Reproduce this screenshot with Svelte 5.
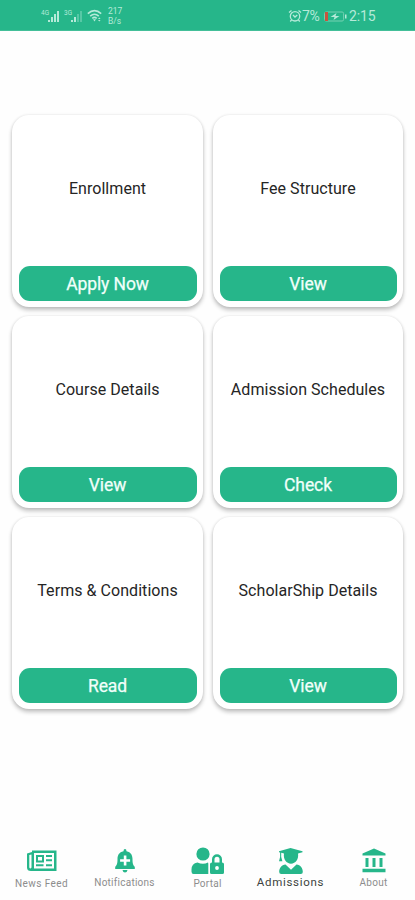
<script>
  const cards = [
    { title: 'Enrollment', action: 'Apply Now' },
    { title: 'Fee Structure', action: 'View' },
    { title: 'Course Details', action: 'View' },
    { title: 'Admission Schedules', action: 'Check' },
    { title: 'Terms & Conditions', action: 'Read' },
    { title: 'ScholarShip Details', action: 'View' }
  ];
  const tabs = [
    { id: 'news', label: 'News Feed' },
    { id: 'bell', label: 'Notifications' },
    { id: 'portal', label: 'Portal' },
    { id: 'admissions', label: 'Admissions' },
    { id: 'about', label: 'About' }
  ];
  let active = $state('admissions');
</script>

<div class="screen">
  <header class="status">
    <div class="left">
      <svg class="signal" width="20" height="14" viewBox="0 0 20 14">
        <text x="0" y="6" font-size="6.5">4G</text>
        <path d="M7 11h2v2H7zM10 8h2v5h-2zM13 5h2v8h-2zM16 2h2v11h-2z" />
      </svg>
      <svg class="signal second" width="20" height="14" viewBox="0 0 20 14">
        <text x="0" y="6" font-size="6.5">3G</text>
        <path d="M7 11h2v2H7zM10 8h2v5h-2z" />
        <path opacity=".35" d="M13 5h2v8h-2zM16 2h2v11h-2z" />
      </svg>
      <svg class="wifi" width="16" height="14" viewBox="0 0 16 14">
        <g fill="none" stroke="#b5ead9" stroke-width="1.6">
          <path d="M.8 4.6Q7.500-1.200 14.200 4.600M3.200 7.100Q7.500 3.400 11.800 7.100M5.300 9.300Q7.500 7.500 9.700 9.300" />
        </g>
        <path d="M6 10.300h3L7.500 12.500zM11 10l1.300-1.600L13.600 10zM11 11h2.600l-1.300 1.600z" />
      </svg>
      <div class="rate"><span>217</span><span>B/s</span></div>
    </div>
    <div class="right">
      <svg width="14" height="14" viewBox="0 0 14 14">
        <g fill="none" stroke="#b5ead9" stroke-width="1.300">
          <circle cx="7" cy="7.300" r="4.700" />
          <path d="M1 3.600 3.500 1.500M13 3.600 10.500 1.500M5 6l2 2 2.300-2M3.600 11l-1.400 1.500M10.400 11l1.400 1.500" />
        </g>
      </svg>
      <span class="percent">7%</span>
      <svg class="battery" width="23" height="11" viewBox="0 0 23 11">
        <rect x=".6" y="1" width="19" height="9" rx="1.500" fill="none" stroke="#75d1b2" stroke-width="1" />
        <rect x="1" y="1" width="3" height="9" style:fill="#c6553d" />
        <path d="M21 3.500h1.500v4H21zM6.500 6l6-4-1 3h4l-6 4 1-3z" />
      </svg>
      <span class="time">2:15</span>
    </div>
  </header>

  <main class="grid">
    {#each cards as card}
      <section class="card">
        <div class="title">{card.title}</div>
        <button class="action">{card.action}</button>
      </section>
    {/each}
  </main>

  <nav class="tabs">
    {#each tabs as tab}
      <button class="tab {tab.id}" class:active={active === tab.id} onclick={() => (active = tab.id)}>
        <svg width="36" height="28" viewBox="0 0 36 28">
          {#if tab.id === 'news'}
            <path fill-rule="evenodd" d="M8 3.500h24.500V24H7Q3 24 3 20.500V6.500L8 5zM10 6v15.500h20V6zM5.300 8v12.500q1 2 2.200 0V7.500z" />
            <path fill-rule="evenodd" d="M12 8h8v7.500h-8zM14 10v3.500h4V10zM22 8h6v2h-6zM22 12.300h6v2h-6zM12 17.300h7.500v2H12zM22 17.300h6v2h-6z" />
          {:else if tab.id === 'bell'}
            <path d="M18 2q1.500 0 1.500 2.200c4.500.9 6 4.100 6 7.800 0 4.500.6 6.200 2.300 7.800V22H8.200v-2.200c1.700-1.600 2.300-3.300 2.300-7.800 0-3.700 1.500-6.900 6-7.800Q16.500 2 18 2zM15.500 23h5Q20 25.600 18 25.600T15.500 23z" />
            <path class="cut" d="M16.800 8.500h2.600v3.700h3.700v2.600h-3.700v3.700h-2.600v-3.700h-3.700v-2.600h3.700z" />
          {:else if tab.id === 'portal'}
            <circle cx="13" cy="7" r="6.600" />
            <path d="M7.500 15.500Q13 18 18 15.500Q18.300 16 18.300 17V27H3.500Q1.500 27 1.500 24.500v-2q0-6 6-7z" />
            <path fill-rule="evenodd" d="M22 15.500v-3.200a5 5 0 0 1 10 0v3.200q2 0 2 1.500v8.500q0 1.500-1.500 1.500h-11Q20 27 20 25.500V17q0-1.500 2-1.500zM24.500 15.500h5v-3.200a2.500 2.500 0 0 0-5 0z" />
            <circle class="cut" cx="27" cy="21" r="1.900" />
          {:else if tab.id === 'admissions'}
            <path d="M6 4.300 17.500 1 29.500 4.300v.9L25 6.600c1 5.800-2.500 10.100-7 10.100S10 12.400 11 6.600L8.200 5.800V10l1.200 4.300H6L7.100 10V5.500L6 5.200z" />
            <path d="m12.500 17.500 5.500 5.300 5.500-5.300c4 .5 6.300 3.500 6.300 7.500q0 2-2 2H8.200q-2 0-2-2c0-4 2.300-7 6.300-7.500z" />
          {:else}
            <path d="m18 1.500 11.500 5v2h-23v-2zM9.500 11h3v9h-3zM16.500 11h3v9h-3zM23.500 11h3v9h-3zM6.500 21.800h23v3.400h-23z" />
          {/if}
        </svg>
        <span>{tab.label}</span>
      </button>
    {/each}
  </nav>
</div>

<style>
  :global(body) { margin: 0; background: #fff; }
  .screen {
    width: 415px;
    height: 900px;
    display: flex;
    flex-direction: column;
    background: #fefefe;
    font-family: Roboto, "Liberation Sans", sans-serif;
    overflow: hidden;
  }
  button { border: 0; padding: 0; font-family: inherit; cursor: pointer; }
  .status {
    height: 31px;
    flex: none;
    box-sizing: border-box;
    display: flex;
    justify-content: space-between;
    padding: 2px 38px 0 41px;
    background: #26b68a;
    border-bottom: 1px solid #43bf99;
    color: #b5ead9;
  }
  .status svg { fill: #b5ead9; }
  .left, .right { display: flex; align-items: center; }
  .second { margin-left: 3px; }
  .wifi { margin-left: 3px; }
  .rate { display: flex; flex-direction: column; margin-left: 5px; font-size: 8.500px; line-height: 10px; letter-spacing: 0; }
  .percent { font-size: 14px; width: 22px; letter-spacing: -.4px; }
  .battery { margin-right: 2px; }
  .time { font-size: 14px; width: 28px; letter-spacing: -.1px; }
  .grid {
    flex: 1;
    display: grid;
    grid-template-columns: 191px 190px;
    grid-auto-rows: 192px;
    gap: 9px 10px;
    padding: 85px 12px 0;
    margin-top: -1px;
  }
  .card {
    display: flex;
    flex-direction: column;
    padding: 0 6px 6px 7px;
    border-radius: 17px;
    background: #fff;
    box-shadow: 0 3px 4px rgba(0, 0, 0, .24), 0 0 3px rgba(0, 0, 0, .1);
  }
  .title {
    flex: 1;
    display: flex;
    align-items: center;
    justify-content: center;
    padding: 0 1px 4px 0;
    color: #252525;
    font-size: 16px;
    letter-spacing: .05px;
    white-space: nowrap;
  }
  .action {
    height: 35px;
    border-radius: 11px;
    background: #26b68a;
    color: #f1fffa;
    font-size: 17.500px;
    letter-spacing: -.1px;
    padding-right: 1px;
    -webkit-text-stroke: .25px #f1fffa;
  }
  .tabs { display: flex; height: 54px; flex: none; }
  .tab {
    width: 83px;
    display: flex;
    flex-direction: column;
    align-items: center;
    background: none;
    color: #8d8d8d;
    font-size: 10px;
    letter-spacing: .25px;
    line-height: 16px;
  }
  .tab svg { fill: #26b68a; flex: none; margin-top: 1px; }
  .tab .cut { fill: #fff; }
  .news span, .portal span { padding-top: 1px; }
  .news { letter-spacing: .4px; }
  .tab.active { color: #3c4340; font-size: 11.500px; letter-spacing: .7px; }
  .tab.active span { margin-top: -1px; }
</style>
